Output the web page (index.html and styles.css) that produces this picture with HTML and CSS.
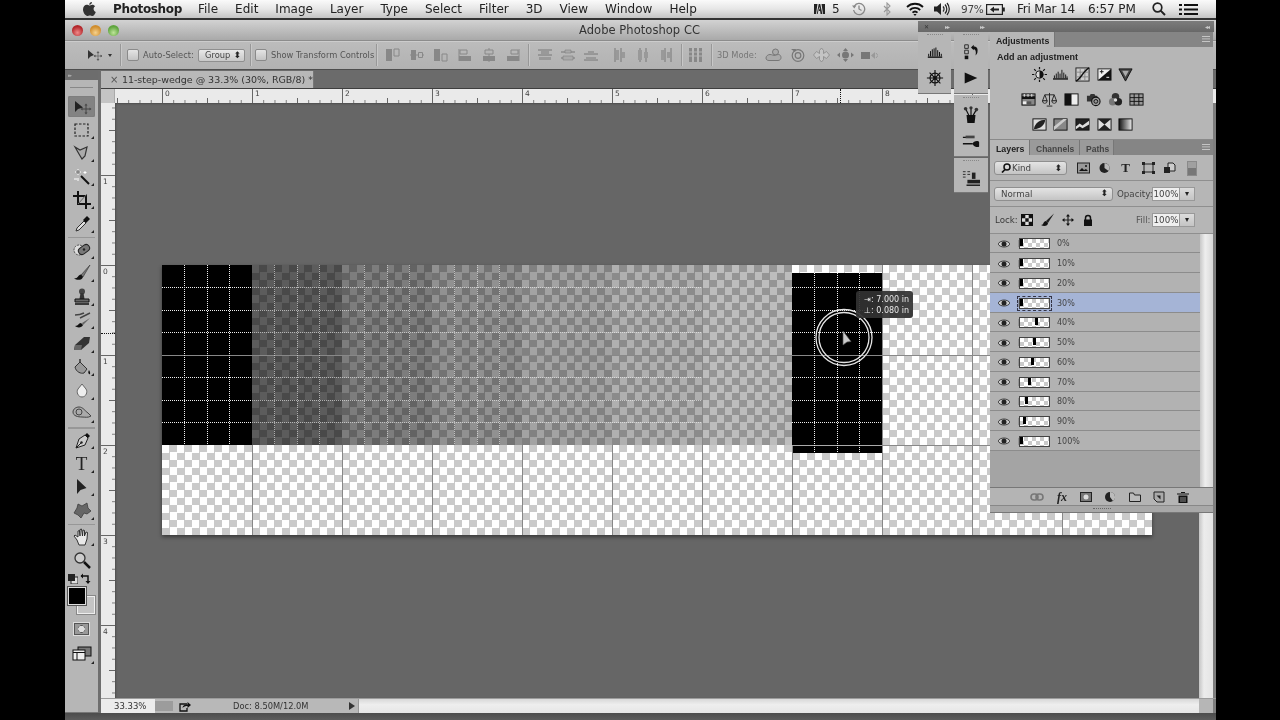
FILE: index.html
```html
<!DOCTYPE html>
<html lang="en">
<head>
<meta charset="utf-8">
<title>Adobe Photoshop CC</title>
<link rel="stylesheet" href="styles.css">
</head>
<body>
<div class="screen">
  <header class="menubar">
    <svg class="apple" viewBox="0 0 14 16"><path d="M10 1c0 1.500-1.300 2.900-2.800 2.800C7.100 2.300 8.500 1 10 1zM7.300 4.500c.8 0 1.700-.8 3-.8 1.100 0 2.200.6 2.900 1.600-2.400 1.400-2 4.700.6 5.700-.8 1.900-2 4-3.400 4-.9 0-1.400-.6-2.500-.6s-1.700.6-2.600.6C3.600 15 1 11.800 1 8.600 1 5.600 2.900 3.800 4.700 3.800c1.100 0 2 .7 2.600.7z"/></svg>
    <nav class="menus">
      <span class="appname">Photoshop</span><span>File</span><span>Edit</span><span>Image</span><span>Layer</span><span>Type</span><span>Select</span><span>Filter</span><span>3D</span><span>View</span><span>Window</span><span>Help</span>
    </nav>
    <div class="status-items">
      <svg class="st-adobe" viewBox="0 0 11 12"><path d="M0 1h3.500L2 11H0zM7.500 1H11v10H9zM4.700 1h1.600l2 10H6.600l-.5-3H4.800l.6-2h.4l-.5-2.500L3.700 11H2.800z"/></svg>
      <span class="st-5">5</span>
      <svg class="st-tm" viewBox="0 0 14 14"><g fill="none" stroke="#888" stroke-width="1.300"><path d="M2.400 4A5.600 5.600 0 1 1 1.600 8"/><path d="M7 3.500V7l2.500 1.500"/></g><path d="M0 3.500h4.500L2.300 6.500z" fill="#888"/></svg>
      <svg class="st-bt" viewBox="0 0 8 14"><path d="M1 4l6 6-3 3V1l3 3-6 6" fill="none" stroke="#999" stroke-width="1.100"/></svg>
      <svg class="st-wifi" viewBox="0 0 18 14"><g fill="none" stroke="#111" stroke-width="1.800"><path d="M1 5a11.500 11.500 0 0 1 16 0"/><path d="M3.800 8a7.500 7.500 0 0 1 10.400 0"/><path d="M6.500 10.700a3.600 3.600 0 0 1 5 0"/></g><path d="M9 14l-1.600-2h3.200z" fill="#111"/></svg>
      <svg class="st-vol" viewBox="0 0 17 14"><path d="M0 4.500h3L7 1v12L3 9.500H0z" fill="#222"/><g fill="none" stroke="#222" stroke-width="1.200"><path d="M9 4.500a3.500 3.500 0 0 1 0 5"/><path d="M11 2.500a6.500 6.500 0 0 1 0 9"/><path d="M13 1a9 9 0 0 1 0 12"/></g></svg>
      <span class="st-pct">97%</span>
      <svg class="st-batt" viewBox="0 0 19 11"><rect x=".6" y=".6" width="15.800" height="9.800" fill="none" stroke="#222" stroke-width="1.200"/><rect x="17" y="3.500" width="1.800" height="4" fill="#222"/><path d="M4 5.500l4-3v2h5v2H8v2z" fill="#222"/></svg>
      <span class="st-date">Fri Mar 14</span>
      <span class="st-time">6:57 PM</span>
      <svg class="st-search" viewBox="0 0 14 14"><circle cx="5.500" cy="5.500" r="4.300" fill="none" stroke="#222" stroke-width="1.700"/><path d="M8.600 8.600L13 13" stroke="#222" stroke-width="2"/></svg>
      <svg class="st-list" viewBox="0 0 19 13"><path d="M0 1h3v2H0zM5 1h14v2H5zM0 5.500h3v2H0zM5 5.500h14v2H5zM0 10h3v2H0zM5 10h14v2H5z" fill="#111"/></svg>
    </div>
  </header>

  <div class="titlebar">
    <div class="lights"><i class="light red"></i><i class="light amber"></i><i class="light green"></i></div>
    <span class="apptitle">Adobe Photoshop CC</span>
  </div>

  <div class="options">
    <div class="o-move">
      <svg class="o16" viewBox="0 0 16 14"><path d="M1 2v9l2.500-2.500L7 7z" fill="#333"/><path d="M11 4v8M7.500 8h7M11 3.500l-1 1.200h2zM11 12.500l-1-1.200h2zM7 8l1.200-1v2zM15 8l-1.200-1v2z" fill="#555" stroke="#555" stroke-width=".6"/></svg>
      <i class="caret"></i>
    </div>
    <i class="osep"></i>
    <i class="cb cb-a"></i><span class="olabel ol-auto">Auto-Select:</span>
    <div class="oselect"><span>Group</span><span class="updown">⬍</span></div>
    <i class="osep os-b"></i>
    <i class="cb cb-b"></i><span class="olabel ol-show">Show Transform Controls</span>
    <i class="osep os-b"></i>
    <div class="oicons oi-a">
      <svg class="o14" viewBox="0 0 14 14"><path d="M0 1h6v12H0z" fill="#888"/><path d="M8 1h5v7H8z" fill="none" stroke="#888"/></svg>
      <svg class="o14" viewBox="0 0 14 14"><path d="M0 7h14" stroke="#888"/><path d="M1 2h5v10H1z" fill="#888"/><path d="M8.500 4.500h4v5h-4z" fill="#b6b6b6" stroke="#888"/></svg>
      <svg class="o14" viewBox="0 0 14 14"><path d="M0 1h6v12H0z" fill="#888"/><path d="M8 6h5v7H8z" fill="none" stroke="#888"/></svg>
      <svg class="o14" viewBox="0 0 14 14"><path d="M1 1v12" stroke="#888"/><path d="M2 2h7v4H2z" fill="none" stroke="#888"/><path d="M1 8h12v5H1z" fill="#888"/></svg>
      <svg class="o14" viewBox="0 0 14 14"><path d="M7 0v14" stroke="#888"/><path d="M3 2h8v4H3z" fill="#b6b6b6" stroke="#888"/><path d="M1 8h12v5H1z" fill="#888"/></svg>
      <svg class="o14" viewBox="0 0 14 14"><path d="M13 1v12" stroke="#888"/><path d="M5 2h7v4H5z" fill="none" stroke="#888"/><path d="M1 8h12v5H1z" fill="#888"/></svg>
    </div>
    <i class="osep os-c"></i>
    <div class="oicons oi-b">
      <svg class="o14" viewBox="0 0 14 14"><path d="M0 2h14M0 7h14" stroke="#777"/><path d="M3 3h8v3H3zM1 9h12v3H1z" fill="#999"/></svg>
      <svg class="o14" viewBox="0 0 14 14"><path d="M0 4h14M0 10h14" stroke="#777"/><path d="M4 2h6v3H4zM2 8h10v4H2z" fill="#aaa" stroke="#777" stroke-width=".5"/></svg>
      <svg class="o14" viewBox="0 0 14 14"><path d="M0 6h14M0 12h14" stroke="#777"/><path d="M4 3h6v3H4zM2 9h10v3H2z" fill="#999"/></svg>
      <svg class="o14 oi-gap" viewBox="0 0 14 14"><path d="M2 0v14M8 0v14" stroke="#777"/><path d="M3 2h3v10H3zM9 4h3v6H9z" fill="#999"/></svg>
      <svg class="o14" viewBox="0 0 14 14"><path d="M4 0v14M10 0v14" stroke="#777"/><path d="M2 2h4v10H2zM8 4h4v6H8z" fill="#999"/></svg>
      <svg class="o14" viewBox="0 0 14 14"><path d="M6 0v14M12 0v14" stroke="#777"/><path d="M2 2h3v10H2zM8 4h3v6H8z" fill="#999"/></svg>
    </div>
    <i class="osep os-c"></i>
    <svg class="o15 o-dist" viewBox="0 0 15 16"><path d="M1 1h3v14H1zM6 1h3v14H6zM11 1h3v14h-3z" fill="#888"/><path d="M0 5h15M0 9h15" stroke="#b6b6b6"/></svg>
    <i class="osep os-d"></i>
    <span class="olabel ol-3d">3D Mode:</span>
    <div class="oicons oi-c">
      <svg class="o17" viewBox="0 0 17 14"><g fill="#aaa" stroke="#777"><circle cx="10.500" cy="4" r="3"/><path d="M1 10c0-2 2-3.500 4-3.500s3 1 4 1 3-1 4.500-1 2.500 1.500 2.500 3-1 3-3 3H4c-2 0-3-1-3-2.500z"/></g></svg>
      <svg class="o17" viewBox="0 0 17 14"><g fill="none" stroke="#777" stroke-width="1.200"><circle cx="9" cy="7.500" r="5.800"/><circle cx="9" cy="7.500" r="2.800"/></g><path d="M2 1l5 0-1 3z" fill="#777"/></svg>
      <svg class="o17" viewBox="0 0 17 14"><path d="M8.500 0l2 2.500v3l3-2L16.500 7l-3 3.500-3-2v3l-2 2.500-2-2.500v-3l-3 2L.5 7l3-3.500 3 2v-3z" fill="#c4c4c4" stroke="#888" stroke-width=".8"/></svg>
      <svg class="o17" viewBox="0 0 17 14"><path d="M8.500 0l2.500 3H6zM8.500 14L6 11h5zM0 7l3-2.500v5zM17 7l-3-2.500v5z" fill="#777"/><circle cx="8.500" cy="7" r="3.500" fill="#777"/></svg>
      <svg class="o17" viewBox="0 0 17 14"><path d="M0 4h9v7H0z" fill="#777"/><path d="M10 7.500L14 4v7z" fill="#999"/><path d="M15 5l2 2.500L15 10" fill="none" stroke="#999"/></svg>
    </div>
  </div>

  <div class="workspace">
    <aside class="toolbar">
      <div class="tb-head"><span>▸▸</span></div>
      <div class="tb-grip"></div>
      <div class="tool selected"><svg class="ti" viewBox="0 0 20 20"><path d="M3 4v11l3-3 5-1.500z" fill="#222"/><path d="M14 8v8M10 12h8" stroke="#444"/><path d="M14 6.500l-1.500 2h3zM14 17.500l-1.500-2h3zM8.500 12l2-1.500v3zM19.500 12l-2-1.500v3z" fill="#444"/></svg></div>
      <div class="tool more"><svg class="ti" viewBox="0 0 20 20"><rect x="3" y="4" width="13" height="12" fill="none" stroke="#222" stroke-width="1.200" stroke-dasharray="2.500 1.500"/></svg></div>
      <div class="tool more"><svg class="ti" viewBox="0 0 20 20"><path d="M3 4l5 3 7-3-2 9-3 3-3-5z" fill="#aaa" stroke="#333" stroke-width="1.200"/></svg></div>
      <div class="tool more"><svg class="ti" viewBox="0 0 20 20"><path d="M9 9l8 8" stroke="#111" stroke-width="2"/><path d="M6 2v6M3 5h6M13 4v3M11.500 5.500h3M2 12h3M6 11v3" stroke="#fff" stroke-width="1"/><path d="M6 3v4M4 5h4" stroke="#666"/></svg></div>
      <div class="tool more"><svg class="ti" viewBox="0 0 20 20"><path d="M6 1v13h13M1 6h13v13" fill="none" stroke="#111" stroke-width="2"/><path d="M6 14L15 4" stroke="#666"/></svg></div>
      <div class="tool more"><svg class="ti" viewBox="0 0 20 20"><path d="M12 7l2 2-7 7-3 1 1-3z" fill="#ddd" stroke="#333"/><path d="M11 6l4-4 3 3-4 4z" fill="#111"/></svg></div>
      <i class="tsep"></i>
      <div class="tool more"><svg class="ti" viewBox="0 0 20 20"><circle cx="7" cy="10" r="5" fill="#ddd" stroke="#333" stroke-width=".8" stroke-dasharray="2 1"/><rect x="6" y="6" width="12" height="7" rx="3.500" transform="rotate(-35 12 9.500)" fill="#777" stroke="#222"/><circle cx="12" cy="9.500" r="1.200" fill="#222"/></svg></div>
      <div class="tool more"><svg class="ti" viewBox="0 0 20 20"><path d="M18 2L9 12l2 2z" fill="#777" stroke="#333" stroke-width=".6"/><path d="M9 11.500c-3 0-2.500 4-7 4 3 2 8 2 9-1.500z" fill="#111"/></svg></div>
      <div class="tool more"><svg class="ti" viewBox="0 0 20 20"><circle cx="10" cy="4.500" r="3" fill="#444"/><path d="M8.500 6h3l1 6h-5z" fill="#333"/><path d="M3 12h14v3H3z" fill="#666" stroke="#111"/><path d="M3 17h14" stroke="#111" stroke-width="1.500"/></svg></div>
      <div class="tool more"><svg class="ti" viewBox="0 0 20 20"><path d="M18 3L8 8M3 5c4 0 7-1 9-2" stroke="#444" stroke-width="1.500" fill="none"/><path d="M18 8l-8 5 1 2z" fill="#666"/><path d="M9 13c-3 0-2 3-6 3 2 2 7 2 8-1z" fill="#111"/></svg></div>
      <div class="tool more"><svg class="ti" viewBox="0 0 20 20"><path d="M3 11L12 3h6l-1 6-8 7H2z" fill="#333"/><path d="M3 11h7l-1 5H2z" fill="#666"/></svg></div>
      <div class="tool more"><svg class="ti" viewBox="0 0 20 20"><path d="M3 10l5-5 7 7-3 4c-3 1-8-1-9-6z" fill="#999" stroke="#333"/><path d="M8 5V2" stroke="#333" stroke-width="1.500"/><path d="M17 13c-1 2-1 3 0 4s2-1 0-4z" fill="#111"/></svg></div>
      <div class="tool more"><svg class="ti" viewBox="0 0 20 20"><path d="M10 3l4 5c2 3 0 8-4 8s-6-5-4-8z" fill="#eee" stroke="#666"/></svg></div>
      <div class="tool more"><svg class="ti" viewBox="0 0 20 20"><path d="M1 8c0-3 3-5 6-5 4 0 6 4 9 6l3 3c-3 2-6 1-9 1-4 0-9-1-9-5z" fill="#aaa" stroke="#444"/><circle cx="7" cy="8" r="3" fill="none" stroke="#444"/></svg></div>
      <i class="tsep"></i>
      <div class="tool more"><svg class="ti" viewBox="0 0 20 20"><path d="M13 5l3 3-3 7-9 3 3-9z" fill="#ccc" stroke="#222"/><path d="M4 18l5-5" stroke="#222"/><circle cx="9.500" cy="12.500" r="1.200" fill="#222"/><path d="M13 5l2-2 3 3-2 2z" fill="#111"/></svg></div>
      <div class="tool more tool-t"><span class="type-t">T</span></div>
      <div class="tool more"><svg class="ti" viewBox="0 0 20 20"><path d="M5 2v15l3.500-4 6-2z" fill="#222"/></svg></div>
      <div class="tool more"><svg class="ti" viewBox="0 0 20 20"><path d="M2 12l3-5 1-4 4 2 5-3 1 5 3 3-4 3-3-1-3 5-3-3z" fill="#666" stroke="#333" stroke-width=".7"/></svg></div>
      <i class="tsep"></i>
      <div class="tool more"><svg class="ti" viewBox="0 0 20 20"><path d="M5 13L2 9l1-1 3 2V4l1.500-.5L8 9V2.500L9.500 2 10.500 9 11 3l1.500.5V9l1.500-4 1.500.5L15 12l-2 6H7z" fill="#e8e8e8" stroke="#222" stroke-width=".9"/></svg></div>
      <div class="tool"><svg class="ti" viewBox="0 0 20 20"><circle cx="8" cy="8" r="5" fill="#ccc" stroke="#333" stroke-width="1.300"/><path d="M12 12l6 6" stroke="#111" stroke-width="2.500"/></svg></div>
      <div class="swatch-mini">
        <svg class="sm-a" viewBox="0 0 10 10"><rect x="3" y="3" width="7" height="7" fill="#ddd" stroke="#222"/><rect width="7" height="7" fill="#222"/></svg>
        <svg class="sm-b" viewBox="0 0 12 12"><path d="M1 3h7v7" fill="none" stroke="#111" stroke-width="1.500"/><path d="M3 0.500v5L.5 3zM5.500 8h5L8 11z" fill="#111"/></svg>
      </div>
      <div class="colors"><i class="bgcolor"></i><i class="fgcolor"></i></div>
      <div class="qmask"><i></i></div>
      <div class="tool more screenmode"><svg class="ti" viewBox="0 0 20 20"><rect x="6" y="2" width="13" height="9" fill="#777" stroke="#111"/><rect x="1" y="5" width="12" height="10" fill="#eee" stroke="#111"/><path d="M1 7.500h12M5 8v7" stroke="#111"/></svg></div>
    </aside>
    <div class="divider"></div>
    <section class="docwin">
      <div class="tabbar">
        <div class="tab"><span class="tabx">×</span><span class="tabname">11-step-wedge @ 33.3% (30%, RGB/8) *</span></div>
      </div>
      <div class="rulerrow">
        <div class="corner"></div>
        <div class="hruler">
          <span>0</span><span>1</span><span>2</span><span>3</span><span>4</span><span>5</span><span>6</span><span>7</span><span>8</span>
          <i class="hmark"></i>
        </div>
      </div>
      <div class="docmain">
        <div class="vruler">
          <span>1</span><span>0</span><span>1</span><span>2</span><span>3</span><span>4</span>
          <i class="vmark"></i>
        </div>
        <div class="canvas">
          <div class="image">
            <div class="wedge">
              <i class="c c1"></i><i class="c c2"></i><i class="c c3"></i><i class="c c4"></i><i class="c c5"></i><i class="c c6"></i><i class="c c7"></i>
            </div>
            <i class="bar"></i>
            <svg class="guides" viewBox="0 0 990 270">
              <path class="solid" d="M0 90H990M90 180V270M180 180V270M270 180V270M360 180V270M450 180V270M540 0V270M630 180V270M720 0V270M810 0V270M900 0V270M720 180H990"/>
              <path class="solid-l" d="M630 180H720"/>
              <path class="dots" d="M0 22.500H540M0 45H540M0 67.500H540M0 112.500H540M0 135H540M0 157.500H540M22.500 0V180M45 0V180M67.500 0V180M112.500 0V180M135 0V180M157.500 0V180M202.500 0V180M225 0V180M247.500 0V180M292.500 0V180M315 0V180M337.500 0V180"/>
              <path class="dots strong" d="M630 22.500H720M630 45H720M630 67.500H720M630 112.500H720M630 135H720M630 157.500H720M652.500 8V188M675 8V188M697.500 8V188"/>
              <path class="dots strong" d="M0 22.500H90M0 45H90M0 67.500H90M0 112.500H90M0 135H90M0 157.500H90M22.500 0V180M45 0V180M67.500 0V180"/>
              <circle class="ring" cx="682" cy="72.500" r="28"/>
              <circle class="ring" cx="682" cy="72.500" r="25"/>
              <path class="arrow" d="M681 66v14l4-3 4-.5z"/>
            </svg>
            <div class="hud"><span>⇥: 7.000 in</span><span>⊥: 0.080 in</span></div>
          </div>
        </div>
        <div class="vscroll"></div>
        <div class="edge"></div>
      </div>
      <footer class="statusbar">
        <span class="zoomfield">33.33%</span>
        <div class="statusinfo">
          <i class="stbtn"></i>
          <svg class="share" viewBox="0 0 12 11"><path d="M8 3H1v7h7V7" fill="none" stroke="#111" stroke-width="1.300"/><path d="M3.500 7c0-2.500 2-3.500 5-3.500V1L12 4 8.500 7V5c-2 0-3.500 .5-5 2z" fill="#111"/></svg>
          <span class="docsize">Doc: 8.50M/12.0M</span>
          <i class="sttri"></i>
        </div>
        <div class="hscroll"></div>
        <div class="sc-corner"></div>
        <div class="edge"></div>
      </footer>
    </section>
  </div>
  <div class="bottomstrip"></div>

  <div class="dock">
    <div class="dock-head"><span class="dh-x">✕</span><span class="dh-a">▸▸</span><span class="dh-b">▸▸</span><span class="dh-c">◂◂</span></div>
    <div class="dock-body">
      <div class="icol">
        <div class="igroup g-a">
          <i class="igrip"></i>
          <svg class="di" viewBox="0 0 20 20"><path d="M2 15h16v1.500H2z" fill="#111"/><path d="M3 15v-3M5 15V9M7 15V7M9 15v-9M11 15V5M13 15V8M15 15v-5M17 15v-3" stroke="#111" stroke-width="1.100"/></svg>
          <svg class="di" viewBox="0 0 20 20"><g fill="none" stroke="#111" stroke-width="1.300"><circle cx="10" cy="10" r="5.500"/><path d="M10 1v18M1 10h18M4 4l12 12M16 4L4 16"/></g><circle cx="10" cy="10" r="2" fill="#111"/></svg>
        </div>
      </div>
      <div class="icol">
        <div class="igroup g-a">
          <i class="igrip"></i>
          <svg class="di" viewBox="0 0 20 20"><path d="M3 2h4v4H3zM3 8h4v4H3z" fill="none" stroke="#222"/><path d="M3 14h4v4H3z" fill="#111"/><path d="M10 5l3-3v2c4 0 5 3 4 7-.5 1-1 2-2 3 1-4 0-7-2-7v1z" fill="#111"/></svg>
          <svg class="di" viewBox="0 0 20 20"><path d="M3 4l14 6-14 6z" fill="#111"/></svg>
        </div>
        <div class="igroup g-a">
          <i class="igrip"></i>
          <svg class="di" viewBox="0 0 20 20"><path d="M5 10h10l-1 9H6z" fill="#111"/><path d="M8 11L4 3M10 11V2M12 11l4-7" stroke="#111" stroke-width="1.300"/><circle cx="4" cy="3" r="2" fill="#333"/><circle cx="10" cy="2" r="1.800" fill="#333"/><circle cx="16" cy="4" r="2" fill="#333"/></svg>
          <svg class="di" viewBox="0 0 20 20"><path d="M1 6h11M1 13h11" stroke="#111" stroke-width="1.500"/><path d="M4 4h10v3H4z" fill="#444"/><path d="M12 13c0-3 6-4 7-2v5c-1 2-7 0-7-3z" fill="#111"/></svg>
        </div>
        <div class="igroup g-b">
          <i class="igrip"></i>
          <svg class="di" viewBox="0 0 20 20"><path d="M1 3h3M1 6h3M1 9h3M6 3h3M6 6h3" stroke="#222"/><path d="M11 4h4v7h-4z" fill="#222"/><path d="M6 12h14v4H6z" fill="#222"/><path d="M5 18h16" stroke="#111" stroke-width="1.500"/></svg>
        </div>
      </div>
      <div class="panels">
        <section class="panel adj">
          <div class="tabs"><span class="ptab on ptab-adj">Adjustments</span><span class="pmenu"></span></div>
          <div class="adj-body">
            <h2 class="adj-title">Add an adjustment</h2>
            <div class="adj-row">
              <svg class="ai" viewBox="0 0 16 16"><circle cx="8" cy="8" r="4" fill="#ddd" stroke="#111"/><path d="M8 4a4 4 0 0 1 0 8z" fill="#111"/><path d="M8 0v2.500M8 13.500V16M0 8h2.500M13.500 8H16M2.300 2.300l1.800 1.800M11.900 11.900l1.800 1.800M13.700 2.300l-1.800 1.800M4.100 11.900l-1.800 1.800" stroke="#111" stroke-width="1.300"/></svg>
              <svg class="ai" viewBox="0 0 16 16"><path d="M0 12h16v1.500H0z" fill="#111"/><path d="M1.500 12V9M3.500 12V7M5.500 12V5M7.500 12V7M9.500 12V3M11.500 12V6M13.500 12V8M15 12v-2" stroke="#111"/></svg>
              <svg class="ai" viewBox="0 0 16 16"><rect x="1" y="1" width="14" height="14" fill="#ccc" stroke="#222"/><path d="M1 5.500h14M1 10.500h14M5.500 1v14M10.500 1v14" stroke="#888"/><path d="M1 15C6 13 9 4 15 1" fill="none" stroke="#111" stroke-width="1.500"/></svg>
              <svg class="ai" viewBox="0 0 16 16"><rect x="1" y="2" width="14" height="12" fill="#eee" stroke="#222"/><path d="M1 14L15 2v12z" fill="#111"/><path d="M3 5h4M5 3v4" stroke="#111"/><path d="M10 11h3" stroke="#fff"/></svg>
              <svg class="ai" viewBox="0 0 16 16"><path d="M1 2h14L8 15z" fill="#444" stroke="#111"/><path d="M4.500 4h7L8 10.500z" fill="#aaa"/></svg>
            </div>
            <div class="adj-row">
              <svg class="ai" viewBox="0 0 16 16"><rect x="1" y="2" width="14" height="12" fill="#888" stroke="#111"/><path d="M1 6h14" stroke="#111" stroke-width="3"/><path d="M3 2h1v3H3zM7 2h1v3H7zM11 2h1v3h-1z" fill="#eee"/><path d="M2 10h4v3H2z" fill="#eee"/><path d="M6 10h5v3H6z" fill="#555"/></svg>
              <svg class="ai" viewBox="0 0 16 16"><g fill="none" stroke="#222"><path d="M3 3h10M8 1v13M5 15h6"/><path d="M3 3L.5 9.500h5zM13 3l-2.500 6.500h5z"/></g><path d="M.5 9.500h5a2.500 2.500 0 0 1-5 0zM10.500 9.500h5a2.500 2.500 0 0 1-5 0z" fill="#ddd" stroke="#222"/></svg>
              <svg class="ai" viewBox="0 0 16 16"><rect x="1" y="2" width="14" height="12" fill="#eee" stroke="#111"/><path d="M1 2h7v12H1z" fill="#111"/></svg>
              <svg class="ai" viewBox="0 0 16 16"><path d="M1 4h3l1-2h4l1 2h2v6H1z" fill="#333"/><circle cx="10.500" cy="10" r="4.500" fill="#999" stroke="#111" stroke-width="1.200"/><circle cx="10.500" cy="10" r="2" fill="none" stroke="#111"/></svg>
              <svg class="ai" viewBox="0 0 16 16"><circle cx="8" cy="5" r="4" fill="#333"/><circle cx="5" cy="10.500" r="4" fill="#777"/><circle cx="11" cy="10.500" r="4" fill="#222"/><circle cx="8" cy="8.500" r="1.800" fill="#ddd"/></svg>
              <svg class="ai" viewBox="0 0 16 16"><rect x="1" y="2" width="14" height="12" fill="#999" stroke="#111"/><path d="M1 6h14M1 10h14M5.500 2v12M10.500 2v12" stroke="#111"/></svg>
            </div>
            <div class="adj-row">
              <svg class="ai" viewBox="0 0 16 16"><rect x="1" y="2" width="14" height="12" fill="#ddd" stroke="#111"/><path d="M2 13C3 6 9 3 14 3c0 5-5 10-12 10z" fill="#222"/></svg>
              <svg class="ai" viewBox="0 0 16 16"><rect x="1" y="2" width="14" height="12" fill="#888" stroke="#111"/><path d="M1 10L11 2h4L1 14z" fill="#ccc"/></svg>
              <svg class="ai" viewBox="0 0 16 16"><rect x="1" y="2" width="14" height="12" fill="#222" stroke="#111"/><path d="M1 10l4-3 3 2 7-5v4l-7 4-3-2-4 3z" fill="#ddd"/></svg>
              <svg class="ai" viewBox="0 0 16 16"><rect x="1" y="2" width="14" height="12" fill="#ddd" stroke="#111"/><path d="M1 2h14L8 8zM1 14h14L8 8z" fill="#222"/></svg>
              <svg class="ai" viewBox="0 0 16 16"><defs><linearGradient id="gm"><stop offset="0" stop-color="#111"/><stop offset="1" stop-color="#eee"/></linearGradient></defs><rect x="1" y="2" width="14" height="12" fill="url(#gm)" stroke="#111"/></svg>
            </div>
          </div>
        </section>
        <section class="panel layers">
          <div class="tabs"><span class="ptab on ptab-l">Layers</span><span class="ptab ptab-c">Channels</span><span class="ptab ptab-p">Paths</span><span class="pmenu"></span></div>
          <div class="lrow filter">
            <div class="pselect kind"><svg class="kindglass" viewBox="0 0 10 10"><circle cx="6" cy="4" r="3" fill="none" stroke="#111" stroke-width="1.500"/><path d="M4 6.500L1 9.500" stroke="#111" stroke-width="1.700"/></svg><span>Kind</span><span class="updown">⬍</span></div>
            <svg class="fi fi1" viewBox="0 0 13 12"><rect x=".5" y="1" width="12" height="10" fill="#999" stroke="#222"/><path d="M2 9l3-3 2 2 2-1 2 2z" fill="#111"/><circle cx="9" cy="4" r="1" fill="#111"/></svg>
            <svg class="fi fi2" viewBox="0 0 13 12"><circle cx="6.500" cy="6" r="5" fill="#222"/><path d="M6.500 1a5 5 0 0 1 4 8L6.500 6z" fill="#bbb"/></svg>
            <span class="fi fi3">T</span>
            <svg class="fi fi4" viewBox="0 0 13 12"><path d="M2 2h9v8H2z" fill="none" stroke="#222"/><path d="M0 0h3v3H0zM10 0h3v3h-3zM0 9h3v3H0zM10 9h3v3h-3z" fill="#222"/></svg>
            <svg class="fi fi5" viewBox="0 0 13 12"><path d="M5 1h5l2 2v6H5z" fill="#ccc" stroke="#222"/><path d="M1 5h6v6H1z" fill="#222"/></svg>
            <div class="ftoggle"><i></i></div>
          </div>
          <div class="lrow blend">
            <div class="pselect normal"><span>Normal</span><span class="updown">⬍</span></div>
            <span class="plabel pl-op">Opacity:</span>
            <span class="pinput">100%</span><span class="pdrop">▾</span>
          </div>
          <div class="lrow lock">
            <span class="plabel pl-lock">Lock:</span>
            <svg class="li li1" viewBox="0 0 12 12"><rect x=".5" y=".5" width="11" height="11" fill="#ddd" stroke="#111"/><path d="M1 1h3.300v3.300H1zM7.700 1H11v3.300H7.700zM4.300 4.300h3.400v3.400H4.300zM1 7.700h3.300V11H1zM7.700 7.700H11V11H7.700z" fill="#111"/></svg>
            <svg class="li li2" viewBox="0 0 14 14"><path d="M13 .5L5 8l2 2z" fill="#222"/><path d="M5 8c-3 0-2 4-5 4 3 2 7 1 7-2z" fill="#111"/></svg>
            <svg class="li li3" viewBox="0 0 12 12"><path d="M6 1v10M1 6h10" stroke="#222" stroke-width="1.200"/><path d="M6 0L4 2.500h4zM6 12L4 9.500h4zM0 6l2.500-2v4zM12 6L9.500 4v4z" fill="#111"/></svg>
            <svg class="li li4" viewBox="0 0 12 12"><path d="M3.500 6V4a2.500 2.500 0 0 1 5 0v2" fill="none" stroke="#111" stroke-width="1.500"/><path d="M2 5.500h8V12H2z" fill="#111"/></svg>
            <span class="plabel pl-fill">Fill:</span>
            <span class="pinput">100%</span><span class="pdrop">▾</span>
          </div>
          <div class="listwrap">
            <div class="list">
              <div class="layer"><svg class="eye" viewBox="0 0 12 8"><path d="M0 4c2-4 10-4 12 0-2 4-10 4-12 0z" fill="#ccc" stroke="#222" stroke-width=".8"/><circle cx="6" cy="4" r="2.500" fill="#222"/></svg><div class="thumb"><i class="p0"></i></div><span class="lname">0%</span></div>
              <div class="layer"><svg class="eye" viewBox="0 0 12 8"><path d="M0 4c2-4 10-4 12 0-2 4-10 4-12 0z" fill="#ccc" stroke="#222" stroke-width=".8"/><circle cx="6" cy="4" r="2.500" fill="#222"/></svg><div class="thumb"><i class="p0"></i></div><span class="lname">10%</span></div>
              <div class="layer"><svg class="eye" viewBox="0 0 12 8"><path d="M0 4c2-4 10-4 12 0-2 4-10 4-12 0z" fill="#ccc" stroke="#222" stroke-width=".8"/><circle cx="6" cy="4" r="2.500" fill="#222"/></svg><div class="thumb"><i class="p0"></i></div><span class="lname">20%</span></div>
              <div class="layer current"><svg class="eye" viewBox="0 0 12 8"><path d="M0 4c2-4 10-4 12 0-2 4-10 4-12 0z" fill="#ccc" stroke="#222" stroke-width=".8"/><circle cx="6" cy="4" r="2.500" fill="#222"/></svg><div class="thumb"><i class="p0"></i></div><span class="lname">30%</span></div>
              <div class="layer"><svg class="eye" viewBox="0 0 12 8"><path d="M0 4c2-4 10-4 12 0-2 4-10 4-12 0z" fill="#ccc" stroke="#222" stroke-width=".8"/><circle cx="6" cy="4" r="2.500" fill="#222"/></svg><div class="thumb"><i class="p40"></i></div><span class="lname">40%</span></div>
              <div class="layer"><svg class="eye" viewBox="0 0 12 8"><path d="M0 4c2-4 10-4 12 0-2 4-10 4-12 0z" fill="#ccc" stroke="#222" stroke-width=".8"/><circle cx="6" cy="4" r="2.500" fill="#222"/></svg><div class="thumb"><i class="p50"></i></div><span class="lname">50%</span></div>
              <div class="layer"><svg class="eye" viewBox="0 0 12 8"><path d="M0 4c2-4 10-4 12 0-2 4-10 4-12 0z" fill="#ccc" stroke="#222" stroke-width=".8"/><circle cx="6" cy="4" r="2.500" fill="#222"/></svg><div class="thumb"><i class="p60"></i></div><span class="lname">60%</span></div>
              <div class="layer"><svg class="eye" viewBox="0 0 12 8"><path d="M0 4c2-4 10-4 12 0-2 4-10 4-12 0z" fill="#ccc" stroke="#222" stroke-width=".8"/><circle cx="6" cy="4" r="2.500" fill="#222"/></svg><div class="thumb"><i class="p70"></i></div><span class="lname">70%</span></div>
              <div class="layer"><svg class="eye" viewBox="0 0 12 8"><path d="M0 4c2-4 10-4 12 0-2 4-10 4-12 0z" fill="#ccc" stroke="#222" stroke-width=".8"/><circle cx="6" cy="4" r="2.500" fill="#222"/></svg><div class="thumb"><i class="p80"></i></div><span class="lname">80%</span></div>
              <div class="layer"><svg class="eye" viewBox="0 0 12 8"><path d="M0 4c2-4 10-4 12 0-2 4-10 4-12 0z" fill="#ccc" stroke="#222" stroke-width=".8"/><circle cx="6" cy="4" r="2.500" fill="#222"/></svg><div class="thumb"><i class="p90"></i></div><span class="lname">90%</span></div>
              <div class="layer"><svg class="eye" viewBox="0 0 12 8"><path d="M0 4c2-4 10-4 12 0-2 4-10 4-12 0z" fill="#ccc" stroke="#222" stroke-width=".8"/><circle cx="6" cy="4" r="2.500" fill="#222"/></svg><div class="thumb"><i class="p0"></i></div><span class="lname">100%</span></div>
              <div class="listempty"></div>
            </div>
            <div class="lscroll"></div>
          </div>
          <div class="lfoot">
            <svg class="lf lf1" viewBox="0 0 14 10"><g fill="none" stroke="#777" stroke-width="1.600"><rect x="1" y="2" width="7" height="6" rx="3"/><rect x="6" y="2" width="7" height="6" rx="3"/></g></svg>
            <span class="lf lf2">fx</span>
            <svg class="lf lf3" viewBox="0 0 12 10"><rect x=".5" y=".5" width="11" height="9" fill="#777" stroke="#222"/><circle cx="6" cy="5" r="2.500" fill="#ddd"/></svg>
            <svg class="lf lf4" viewBox="0 0 12 12"><circle cx="6" cy="6" r="5" fill="#222"/><path d="M6 1a5 5 0 0 1 3 9L6 6z" fill="#bbb"/></svg>
            <svg class="lf lf5" viewBox="0 0 12 10"><path d="M.5 1h4l1 2h6v6.500H.5z" fill="#bbb" stroke="#222"/></svg>
            <svg class="lf lf6" viewBox="0 0 12 12"><path d="M1 1h10v10H4L1 8z" fill="#aaa" stroke="#222"/><path d="M3.500 4.500h4v4z" fill="#222"/></svg>
            <svg class="lf lf7" viewBox="0 0 12 12"><path d="M4 1.500h4M0 3h12" stroke="#111" stroke-width="1.200"/><path d="M1.500 4.500h9V12h-9z" fill="#111"/><path d="M4 6v5M6 6v5M8 6v5" stroke="#aaa" stroke-width=".8"/></svg>
          </div>
          <div class="lgrip"><i></i></div>
        </section>
      </div>
    </div>
  </div>
</div>
</body>
</html>
```
FILE: styles.css
```css
* { box-sizing: border-box; }
html, body { margin: 0; height: 720px; overflow: hidden; background: #000; }
body { font-family: "DejaVu Sans", sans-serif; color: #222; }
i { display: block; font-style: normal; }
svg { display: block; flex: none; }

.screen { position: relative; width: 1151px; height: 720px; margin-left: 65px; display: flex; flex-direction: column; overflow: hidden; background: #666; filter: blur(.35px); }

/* menu bar */
.menubar { height: 20px; flex: none; display: flex; align-items: center; background: linear-gradient(#fafafa, #e6e6e6 50%, #c4c4c4); border-bottom: 2px solid #333; padding-left: 17px; }
.apple { width: 14px; height: 16px; fill: #333; }
.menus { display: flex; gap: 17px; margin-left: 17px; font-size: 12px; color: #222; }
.appname { font-weight: 700; width: 68px; font-size: 12px; letter-spacing: -.35px; }
.status-items { display: flex; align-items: center; position: relative; margin-left: auto; font-size: 12px; color: #222; padding-right: 18px; }
.st-adobe { width: 11px; height: 12px; fill: #222; }
.st-5 { margin-left: 7px; width: 8px; }
.st-tm { width: 14px; height: 14px; margin-left: 12px; }
.st-bt { width: 8px; height: 14px; margin-left: 17px; }
.st-wifi { width: 18px; height: 14px; margin-left: 15px; }
.st-vol { width: 17px; height: 14px; margin-left: 10px; }
.st-pct { margin-left: 10px; width: 25px; font-size: 10.500px; letter-spacing: -.3px; color: #444; }
.st-batt { width: 19px; height: 11px; }
.st-date { margin-left: 12px; width: 71px; white-space: nowrap; letter-spacing: -.2px; }
.st-time { width: 64px; white-space: nowrap; letter-spacing: -.1px; }
.st-search { width: 14px; height: 14px; }
.st-list { width: 19px; height: 13px; margin-left: 13px; }

/* title */
.titlebar { height: 21px; flex: none; display: flex; align-items: center; position: relative; background: linear-gradient(#d2d2d2, #a9a9a9); border-bottom: 1px solid #8c8c8c; }
.lights { display: flex; gap: 7px; margin-left: 7px; }
.light { width: 11px; height: 11px; border-radius: 50%; }
.red { background: radial-gradient(circle at 50% 70%, #f08a8a, #b3262a 65%); }
.amber { background: radial-gradient(circle at 50% 70%, #f5d28e, #d08d2d 65%); }
.green { background: radial-gradient(circle at 50% 70%, #bfe59a, #5fa53e 65%); }
.apptitle { position: absolute; left: 514px; top: 3px; font-size: 11.500px; color: #333; white-space: nowrap; letter-spacing: .05px; }

/* options */
.options { height: 29px; flex: none; display: flex; align-items: center; background: linear-gradient(#bcbcbc, #b2b2b2); border-bottom: 1px solid #4e4e4e; box-shadow: inset 0 1px 0 #ccc; font-size: 8.300px; color: #444; }
.o-move { display: flex; align-items: center; width: 33px; margin-left: 22px; }
.o16 { width: 16px; height: 14px; }
.o14 { width: 14px; height: 14px; }
.o15 { width: 15px; height: 16px; }
.o17 { width: 17px; height: 14px; }
.caret { width: 0; height: 0; margin-left: 5px; border: 2.500px solid transparent; border-top: 3px solid #333; border-bottom: 0; }
.osep { width: 1px; height: 22px; background: #989898; box-shadow: 1px 0 0 #c8c8c8; }
.os-b { margin-left: 5px; }
.os-c { margin-left: 8px; }
.os-d { margin-left: 8px; }
.cb { width: 12px; height: 12px; border: 1px solid #8a8a8a; border-radius: 2px; background: linear-gradient(#e4e4e4, #c4c4c4); }
.cb-a { margin-left: 6px; }
.cb-b { margin-left: 4px; }
.olabel { white-space: nowrap; margin-left: 4px; color: #555; }
.ol-auto { width: 48px; }
.ol-show { width: 100px; }
.ol-3d { width: 37px; margin-left: 5px; color: #777; font-size: 8.300px; }
.oselect { display: flex; justify-content: space-between; align-items: center; width: 47px; height: 13px; margin-left: 7px; padding: 0 3px 0 6px; border: 1px solid #8f8f8f; border-radius: 2px; background: linear-gradient(#e8e8e8, #c8c8c8); color: #444; }
.updown { font-size: 9px; color: #222; line-height: 1; }
.oicons { display: flex; }
.oi-a { gap: 10px; margin-left: 9px; }
.oi-b { gap: 9px; margin-left: 9px; }
.oi-gap { margin-left: 6px; }
.oi-c { gap: 7px; margin-left: 11px; }
.o-dist { margin-left: 6px; }

/* workspace */
.workspace { flex: 1; display: flex; min-height: 0; }
.bottomstrip { height: 7px; flex: none; background: linear-gradient(#4c4c4c, #5c5c5c); }
.toolbar { width: 33px; flex: none; display: flex; flex-direction: column; background: #b6b6b6; border-bottom: 1px solid #777; }
.tb-head { height: 10px; background: #6d6d6d; color: #aaa; font-size: 5px; line-height: 10px; padding-left: 3px; letter-spacing: -1px; }
.tb-grip { height: 14px; background: radial-gradient(#888 .6px, transparent .8px) center 5px / 2px 4px repeat-x; background-size: 2px 3px; background-position: 8px 6px; background-repeat: repeat-x; margin: 0 5px; }
.tool { height: 23.500px; flex: none; display: flex; align-items: center; justify-content: center; position: relative; }
.tool.selected { background: #838383; border-radius: 2px; margin: 2px 3px 1px; height: 21px; box-shadow: inset 0 0 1px #555; }
.tool.more::after { content: ""; position: absolute; right: 4px; bottom: 3px; border-style: solid; border-width: 0 0 3px 3px; border-color: transparent transparent #222 transparent; }
.ti { width: 20px; height: 20px; }
.tsep { height: 1.500px; margin: 1px 3px 0; background: #979797; flex: none; }
.tool-t { font-family: "Liberation Serif", serif; }
.type-t { font-size: 19px; color: #222; line-height: 1; }
.swatch-mini { height: 17px; flex: none; display: flex; align-items: center; justify-content: space-between; padding: 0 6px 0 3px; margin-top: -2px; }
.sm-a { width: 10px; height: 10px; }
.sm-b { width: 12px; height: 12px; }
.colors { height: 36px; flex: none; position: relative; }
.fgcolor { position: absolute; left: 3px; top: 0; width: 18px; height: 18px; background: #000; border: 1px solid #ddd; box-shadow: 0 0 0 1px #555; }
.bgcolor { position: absolute; left: 12px; top: 9px; width: 18px; height: 18px; background: #c4c4c4; border: 1px solid #eee; box-shadow: 0 0 0 1px #888; }
.qmask { height: 17px; flex: none; display: flex; justify-content: center; }
.qmask i { width: 15px; height: 12px; background: radial-gradient(circle, #ddd 3px, #555 3.500px, #999 4px); border: 1px solid #555; outline: 1px solid #ddd; }
.screenmode { margin-top: 3px; }
.divider { width: 3px; flex: none; background: #6e6e6e; }
.docwin { flex: 1; min-width: 0; display: flex; flex-direction: column; }

.tabbar { height: 19px; flex: none; background: #6b6b6b; border-bottom: 1px solid #3e3e3e; display: flex; }
.tab { width: 213px; margin-top: 1px; display: flex; align-items: center; background: #b8b8b8; border-right: 1px solid #777; font-size: 9.500px; color: #333; white-space: nowrap; }
.tabx { margin-left: 9px; width: 16px; font-size: 10px; color: #555; }
.tabname { letter-spacing: -.02px; }

.rulerrow { height: 14px; flex: none; display: flex; }
.corner { width: 14px; flex: none; background: #c4c4c4; border-right: 1px solid #aaa; }
.hruler { flex: 1; display: flex; position: relative; overflow: hidden; padding-left: 47px; font-size: 7.500px; color: #444; line-height: 9px;
  background-color: #eaeaea;
  background-image: linear-gradient(90deg, #666 1px, transparent 1px), linear-gradient(90deg, #666 1px, transparent 1px), linear-gradient(90deg, #777 1px, transparent 1px);
  background-size: 90px 14px, 45px 5px, 11.250px 3px;
  background-position: 47px 0, 47px 100%, 47px 100%;
  background-repeat: repeat-x; }
.hruler span { width: 90px; flex: none; padding-left: 3px; }
.hmark { position: absolute; left: 725px; top: 0; height: 14px; border-left: 1px dotted #111; }
.docmain { flex: 1; display: flex; min-height: 0; }
.vruler { width: 14px; flex: none; position: relative; padding-top: 72px; overflow: hidden; font-size: 7.500px; color: #444; line-height: 10px;
  background-color: #eaeaea;
  background-image: linear-gradient(#666 1px, transparent 1px), linear-gradient(#666 1px, transparent 1px), linear-gradient(#777 1px, transparent 1px);
  background-size: 14px 90px, 6px 45px, 3px 11.250px;
  background-position: 0 72px, 100% 27px, 100% 4.500px;
  background-repeat: repeat-y; }
.vruler span { display: block; height: 90px; padding: 2px 0 0 2px; }
.vmark { position: absolute; left: 0; top: 230px; width: 14px; border-top: 1px dotted #111; }
.canvas { flex: 1; min-width: 0; position: relative; overflow: hidden; padding: 162px 0 0 47px; background: #666; box-shadow: inset 1px 1px 2px rgba(0,0,0,.25); }
.image { width: 990px; height: 270px; position: relative; background: repeating-conic-gradient(#cacaca 0 25%, #fff 0 50%) 0 0 / 15px 15px; box-shadow: 0 2px 4px rgba(0,0,0,.45); }
.wedge { display: grid; grid-template-columns: repeat(7, 90px); grid-auto-rows: 180px; }
.c1 { background: #000; }
.c2 { background: rgba(0,0,0,.64); }
.c3 { background: rgba(0,0,0,.51); }
.c4 { background: rgba(0,0,0,.43); }
.c5 { background: rgba(0,0,0,.36); }
.c6 { background: rgba(0,0,0,.31); }
.c7 { background: rgba(0,0,0,.26); }
.bar { position: absolute; left: 630px; top: 8px; width: 90px; height: 180px; background: #000; }
.guides { position: absolute; left: 0; top: 0; width: 990px; height: 270px; fill: none; }
.solid { stroke: #888; stroke-width: 1; shape-rendering: crispEdges; }
.solid-l { stroke: #aaa; stroke-width: 1; shape-rendering: crispEdges; }
.dots { stroke: rgba(255,255,255,.55); stroke-width: 1; stroke-dasharray: 1 1; shape-rendering: crispEdges; }
.dots.strong { stroke: #eee; }
.ring { stroke: #e4e4e4; stroke-width: 1.300; }
.arrow { fill: #ccc; stroke: #555; stroke-width: .7; }
.hud { position: absolute; left: 694px; top: 26px; width: 57px; height: 27px; display: flex; flex-direction: column; justify-content: center; align-items: flex-end; padding-right: 4px; background: rgba(50,50,50,.93); border-radius: 3px; color: #e8e8e8; font-size: 8px; line-height: 11px; white-space: nowrap; }
.vscroll { width: 14px; flex: none; background: linear-gradient(90deg, #c4c4c4, #ececec 35%, #e4e4e4); }
.edge { width: 3px; flex: none; background: #7e7e7e; }
.statusbar { height: 15px; flex: none; display: flex; background: #b6b6b6; border-top: 1px solid #9c9c9c; font-size: 8.500px; color: #333; }
.zoomfield { width: 54px; flex: none; background: #ececec; padding-left: 13px; line-height: 14px; }
.statusinfo { width: 204px; flex: none; display: flex; align-items: center; background: #b8b8b8; border-right: 1px solid #999; }
.stbtn { width: 18px; height: 10px; background: #9c9c9c; }
.share { width: 12px; height: 11px; margin-left: 6px; }
.docsize { margin-left: 42px; width: 116px; font-size: 8.300px; white-space: nowrap; }
.sttri { border-style: solid; border-width: 4px 0 4px 6px; border-color: transparent transparent transparent #333; width: 0; height: 0; }
.hscroll { flex: 1; background: linear-gradient(#d8d8d8, #eeeeee 40%, #e6e6e6); }
.sc-corner { width: 14px; flex: none; background: #b6b6b6; }

/* floating dock */
.dock { position: absolute; left: 853px; top: 21px; width: 296px; height: 492px; display: flex; flex-direction: column; }
.dock-head { height: 11px; flex: none; position: relative; background: linear-gradient(#7c7c7c, #686868); font-size: 6px; line-height: 11px; color: #c8c8c8; }
.dh-x, .dh-a, .dh-b, .dh-c { position: absolute; top: 0; letter-spacing: -1px; }
.dh-x { left: 6px; color: #333; }
.dh-a { left: 27px; }
.dh-b { left: 62px; }
.dh-c { right: 5px; }
.dock-body { flex: 1; display: flex; min-height: 0; }
.icol { width: 33px; margin-right: 3px; display: flex; flex-direction: column; gap: 1px; flex: none; }
.icol + .icol { width: 34px; margin-right: 2px; }
.igroup { background: #b6b6b6; display: flex; flex-direction: column; align-items: center; gap: 8px; border-bottom: 1px solid #777; }
.g-a { height: 62px; }
.g-b { height: 35px; }
.igrip { width: 16px; height: 3px; border-top: 1px dotted #888; margin-top: 2px; margin-bottom: -2px; }
.di { width: 18px; height: 18px; }
.panels { width: 223px; flex: none; display: flex; flex-direction: column; }
.panel { background: #b6b6b6; }
.tabs { height: 15px; flex: none; display: flex; background: #858585; position: relative; }
.ptab { font: 700 8.500px/18px "Liberation Sans", sans-serif; padding-left: 6px; color: #444; border-right: 1px solid #777; white-space: nowrap; overflow: hidden; }
.ptab.on { background: #b6b6b6; color: #222; font-size: 8.800px; }
.ptab-adj { width: 65px; }
.ptab-l { width: 40px; }
.ptab-c { width: 50px; background: #9a9a9a; }
.ptab-p { width: 34px; background: #9a9a9a; }
.pmenu { position: absolute; right: 3px; top: 4px; width: 8px; height: 7px; background: linear-gradient(#ccc 1px, transparent 1px) 0 0 / 8px 2.500px; }
.adj { height: 108px; flex: none; border-bottom: 1px solid #8a8a8a; }
.adj-body { padding: 5px 38px 0 0; }
.adj-title { margin: 0 0 -1px 7px; font: 700 9px/11px "Liberation Sans", sans-serif; color: #222; white-space: nowrap; }
.adj-row { display: flex; justify-content: center; gap: 6.700px; height: 25px; align-items: center; }
.ai { width: 15px; height: 15px; }
.layers { flex: 1; display: flex; flex-direction: column; min-height: 0; }
.lrow { display: flex; align-items: center; flex: none; border-bottom: 1px solid #8f8f8f; padding-left: 4px; }
.filter { height: 25px; margin-top: 1px; position: relative; }
.blend { height: 26px; }
.lock { height: 26.500px; }
.pselect { display: flex; align-items: center; height: 14px; padding: 0 4px 0 6px; border: 1px solid #8f8f8f; border-radius: 3px; background: linear-gradient(#e4e4e4, #c4c4c4); font-size: 8.700px; color: #444; flex: none; }
.pselect .updown { margin-left: auto; }
.kind { width: 73px; padding-left: 6px; }
.kindglass { width: 10px; height: 10px; margin-right: 1px; }
.normal { width: 119px; }
.fi { flex: none; }
svg.fi { width: 13px; height: 12px; }
.fi1 { margin-left: 10px; }
.fi2 { margin-left: 8px; }
.fi3 { margin-left: 8px; width: 13px; font: 700 13px/12px "Liberation Serif", serif; text-align: center; color: #222; }
.fi4 { margin-left: 10px; }
.fi5 { margin-left: 8px; }
.ftoggle { width: 10px; height: 15px; margin-left: 11px; background: #a0a0a0; border: 1px solid #8a8a8a; }
.ftoggle i { height: 7px; margin-top: 6px; background: #777; }
.plabel { font-size: 8.700px; color: #444; white-space: nowrap; flex: none; }
.pl-op { margin-left: 4px; width: 35px; }
.pl-lock { margin-left: 1px; width: 21px; color: #3a3a3a; }
.pl-fill { margin-left: 42px; width: 16px; color: #555; }
.pinput { width: 28px; height: 14px; flex: none; background: #efefef; border: 1px solid #999; font-size: 8.700px; line-height: 12px; text-align: center; color: #444; }
.pdrop { width: 15px; height: 14px; flex: none; background: linear-gradient(#dcdcdc, #c4c4c4); border: 1px solid #999; border-left: 0; font-size: 8px; line-height: 11px; text-align: center; color: #222; }
.li { flex: none; }
.li1 { width: 12px; height: 12px; margin-left: 5px; }
.li2 { width: 14px; height: 14px; margin-left: 8px; }
.li3 { width: 12px; height: 12px; margin-left: 7px; }
.li4 { width: 12px; height: 12px; margin-left: 8px; }
.listwrap { flex: 1; min-height: 0; display: flex; }
.list { flex: 1; display: flex; flex-direction: column; }
.layer { height: 19.750px; flex: none; display: flex; align-items: center; padding-top: 2px; background: #b2b2b2; border-bottom: 1px solid #8c8c8c; font-size: 8px; color: #444; }
.layer.current { background: #a5b4d6; }
.eye { width: 12px; height: 8px; margin-left: 8px; margin-right: 7px; }
.thumb { position: relative; width: 31px; height: 11px; margin-left: 2px; border: 1px solid #444; background: repeating-conic-gradient(#cacaca 0 25%, #fff 0 50%) 0 0 / 8px 8px; box-shadow: -2.500px 0 0 -2px #777; }
.thumb i { position: absolute; top: 0; height: 7px; width: 2.500px; background: #000; }
.p0 { left: 0; width: 3px; }
.p40 { left: 15px; }
.p50 { left: 13px; }
.p60 { left: 11px; }
.p70 { left: 8px; }
.p80 { left: 5px; }
.p90 { left: 3px; }
.current .thumb { outline: 1px dashed #334; outline-offset: 1px; }
.lname { margin-left: 7px; }
.listempty { flex: 1; background: #a4a4a4; }
.lscroll { width: 13px; flex: none; background: linear-gradient(90deg, #c8c8c8, #eeeeee 40%, #d8d8d8); }
.lfoot { height: 19px; flex: none; display: flex; align-items: center; padding-top: 1px; background: #b4b4b4; border-top: 1px solid #777; border-bottom: 1px solid #888; }
.lf { flex: none; }
svg.lf { width: 12px; height: 12px; }
.lf1 { margin-left: 40px; }
svg.lf1 { width: 14px; height: 10px; }
.lf2 { margin-left: 13px; width: 14px; font: italic 700 12px/12px "Liberation Serif", serif; color: #222; }
.lf3 { margin-left: 9px; }
.lf4 { margin-left: 12px; }
.lf5 { margin-left: 13px; }
.lf6 { margin-left: 12px; }
.lf7 { margin-left: 12px; }
.lgrip { height: 7px; flex: none; background: #a8a8a8; border-bottom: 1px solid #777; display: flex; justify-content: center; align-items: center; }
.lgrip i { width: 18px; height: 3px; border-top: 1px dotted #666; }
```
